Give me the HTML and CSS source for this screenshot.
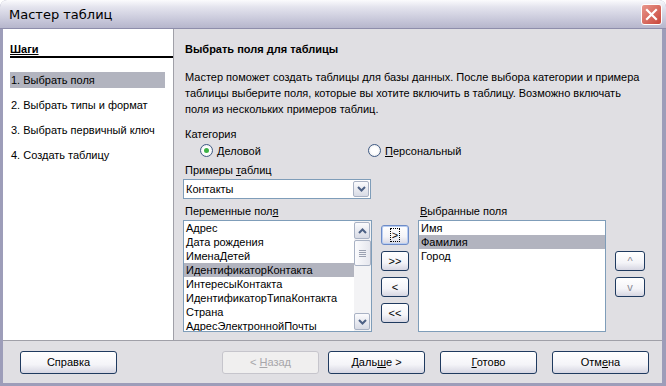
FILE: index.html
```html
<!DOCTYPE html>
<html lang="ru">
<head>
  <meta charset="UTF-8">
  <title>Мастер таблиц</title>
  <link rel="stylesheet" href="styles.css">
</head>
<body>

  <div class="window">
    <div class="titlebar">
      <span class="title">Мастер таблиц</span>
      <span class="close">
        <svg width="13" height="13" viewBox="0 0 13 13"><path d="M2 2 L11 11 M11 2 L2 11" stroke="#fff" stroke-width="2.2" stroke-linecap="square"/></svg>
      </span>
    </div>

    <div class="main">
      <div class="steps">
        <div class="steps-head">Шаги</div>
        <div class="step active">1. Выбрать поля</div>
        <div class="step">2. Выбрать типы и формат</div>
        <div class="step">3. Выбрать первичный ключ</div>
        <div class="step">4. Создать таблицу</div>
      </div>

      <div class="page">
        <div class="page-head">Выбрать поля для таблицы</div>
        <p class="desc">Мастер поможет создать таблицы для базы данных. После выбора категории и примера<br>таблицы выберите поля, которые вы хотите включить в таблицу. Возможно включать<br>поля из нескольких примеров таблиц.</p>

        <div class="label">Категория</div>
        <div class="radios">
          <label class="radio"><span class="dot on"></span><span><u>Д</u>еловой</span></label>
          <label class="radio"><span class="dot"></span><span><u>П</u>ерсональный</span></label>
        </div>

        <div class="label">Примеры <u>т</u>аблиц</div>
        <div class="combo">
          <span>Контакты</span>
          <span class="combo-btn">
            <svg width="9" height="6" viewBox="0 0 9 6"><path d="M1 1 L4.5 4.5 L8 1" stroke="#4d6185" stroke-width="2" fill="none"/></svg>
          </span>
        </div>

        <div class="fields">
          <div class="col">
            <div class="label">Переменные пол<u>я</u></div>
            <div class="list">
              <div class="items">
                <div>Адрес</div>
                <div>Дата рождения</div>
                <div>ИменаДетей</div>
                <div class="sel">ИдентификаторКонтакта</div>
                <div>ИнтересыКонтакта</div>
                <div>ИдентификаторТипаКонтакта</div>
                <div>Страна</div>
                <div>АдресЭлектроннойПочты</div>
              </div>
              <div class="scroll">
                <span class="sb-btn">
                  <svg width="9" height="6" viewBox="0 0 9 6"><path d="M1 5 L4.5 1.5 L8 5" stroke="#4d6185" stroke-width="2" fill="none"/></svg>
                </span>
                <span class="thumb"><i></i><i></i><i></i><i></i></span>
                <span class="track"></span>
                <span class="sb-btn">
                  <svg width="9" height="6" viewBox="0 0 9 6"><path d="M1 1 L4.5 4.5 L8 1" stroke="#4d6185" stroke-width="2" fill="none"/></svg>
                </span>
              </div>
            </div>
          </div>

          <div class="movers">
            <button class="btn small focus"><span class="dotted">&gt;</span></button>
            <button class="btn small">&gt;&gt;</button>
            <button class="btn small">&lt;</button>
            <button class="btn small">&lt;&lt;</button>
          </div>

          <div class="col">
            <div class="label"><u>В</u>ыбранные поля</div>
            <div class="list right">
              <div class="items">
                <div>Имя</div>
                <div class="sel">Фамилия</div>
                <div>Город</div>
              </div>
            </div>
          </div>

          <div class="order">
            <button class="btn small grey">^</button>
            <button class="btn small grey">v</button>
          </div>
        </div>
      </div>
    </div>

    <div class="bottom">
      <button class="btn">Справка</button>
      <span class="spacer"></span>
      <button class="btn disabled">&lt; <u>Н</u>азад</button>
      <button class="btn next">Даль<u>ш</u>е &gt;</button>
      <button class="btn"><u>Г</u>отово</button>
      <button class="btn">Отм<u>е</u>на</button>
    </div>
  </div>

</body>
</html>
```

FILE: styles.css
```css
* {
  box-sizing: border-box;
}

body {
  margin: 0;
  font-family: 'Liberation Sans', Arial, sans-serif;
  font-size: 11px;
  color: #000;
}

.window {
  width: 666px;
  height: 386px;
  background: #9d9db9;
  border-radius: 7px 7px 0 0;
  padding: 0 4px 3px 3px;
  display: flex;
  flex-direction: column;
}

.titlebar {
  height: 29px;
  background: linear-gradient(#fbfbfd 0%, #e4e4ee 25%, #c8c8da 70%, #b6b6cc 100%);
  border-radius: 7px 7px 0 0;
  margin: 0 -4px 0 -3px;
  padding: 0 4px 0 9px;
  display: flex;
  align-items: center;
  justify-content: space-between;
  border-bottom: 1px solid #8e8eab;
}

.title {
  font-family: 'DejaVu Sans', sans-serif;
  font-size: 13px;
  color: #000;
}

.close {
  width: 21px;
  height: 21px;
  border: 1px solid #fff;
  border-radius: 3px;
  background: linear-gradient(135deg, #e8968c, #c9463a);
  display: flex;
  align-items: center;
  justify-content: center;
}

.main {
  flex: 1;
  display: flex;
  background: #e0dfe3;
  border-bottom: 1px solid #a0a0a8;
}

.steps {
  width: 171px;
  background: #fff;
  border-right: 1px solid #a0a0a8;
  padding: 13px 0 0 7px;
}

.steps-head {
  font-weight: bold;
  text-decoration: underline;
  border-bottom: 2px solid #000;
  line-height: 14px;
  margin-bottom: 14px;
}

.step {
  height: 16px;
  line-height: 16px;
  margin-bottom: 9px;
  width: 155px;
  padding-left: 1px;
  white-space: nowrap;
}

.step.active {
  background: #b2b4bf;
}

.page {
  flex: 1;
  padding: 12px 0 0 11px;
}

.page-head {
  font-weight: bold;
  line-height: 16px;
  margin-bottom: 12px;
}

.desc {
  margin: 0 0 9px;
  line-height: 16px;
  white-space: nowrap;
}

.label {
  line-height: 16px;
}

.radios {
  display: flex;
  height: 17px;
  align-items: center;
  padding-left: 15px;
  margin-bottom: 3px;
}

.radio {
  display: flex;
  align-items: center;
  gap: 4px;
  width: 168px;
}

.dot {
  width: 13px;
  height: 13px;
  border-radius: 50%;
  border: 1px solid #3f5a83;
  background: radial-gradient(#fff 40%, #e3e3e6);
  display: flex;
  align-items: center;
  justify-content: center;
}

.dot.on::after {
  content: "";
  width: 5px;
  height: 5px;
  border-radius: 50%;
  background: #3db246;
}

.combo {
  width: 188px;
  height: 20px;
  margin: 1px 0 0 -2px;
  background: #fff;
  border: 1px solid #7f9db9;
  display: flex;
  align-items: center;
  justify-content: space-between;
  padding: 0 1px 0 2px;
}

.combo-btn, .sb-btn {
  width: 16px;
  height: 16px;
  border: 1px solid #a9b2c4;
  border-radius: 2px;
  background: linear-gradient(#fbfbfd, #d8dbe5);
  display: flex;
  align-items: center;
  justify-content: center;
}

.fields {
  display: flex;
  margin: 4px 0 0 -2px;
}

.col .label {
  padding-left: 2px;
  margin-bottom: 1px;
}

.list {
  width: 189px;
  height: 112px;
  background: #fff;
  border: 1px solid #7f9db9;
  display: flex;
  overflow: hidden;
}

.list.right {
  width: 188px;
}

.items {
  flex: 1;
}

.items div {
  height: 14px;
  line-height: 14px;
  padding-left: 2px;
  white-space: nowrap;
}

.items .sel {
  background: #b2b4bf;
}

.scroll {
  width: 17px;
  display: flex;
  flex-direction: column;
  background: #f3f3f5;
  padding: 1px 0;
}

.scroll .sb-btn {
  height: 17px;
}

.thumb {
  height: 26px;
  margin-top: 1px;
  border: 1px solid #a9b2c4;
  border-radius: 2px;
  background: linear-gradient(90deg, #fbfbfd, #e6e7ee);
  display: flex;
  flex-direction: column;
  align-items: center;
  justify-content: center;
  gap: 1px;
}

.thumb i {
  width: 7px;
  height: 1px;
  background: #9aa0b0;
}

.track {
  flex: 1;
}

.movers {
  display: flex;
  flex-direction: column;
  padding: 22px 0 0 9px;
  width: 46px;
  gap: 6px;
}

.order {
  display: flex;
  flex-direction: column;
  padding: 48px 0 0 9px;
  gap: 6px;
}

.btn {
  font-family: 'Liberation Sans', Arial, sans-serif;
  font-size: 11px;
  color: #000;
  width: 97px;
  height: 23px;
  border: 1px solid #1f3a5f;
  border-radius: 3px;
  background: linear-gradient(#ffffff 0%, #f4f4f8 60%, #d6d6e2 100%);
  padding: 0;
}

.btn.small {
  width: 28px;
  height: 20px;
}

.order .btn.small {
  width: 30px;
}

.btn.grey {
  color: #8a8a94;
}

.btn.focus {
  border-color: #6d8bc7;
  box-shadow: inset 0 0 0 1px #b8cdf2;
}

.dotted {
  border: 1px dotted #000;
  padding: 0 1px;
}

.btn.disabled {
  color: #a7a6aa;
  border-color: #c6c5cc;
  background: #f0efef;
}

.bottom {
  height: 42px;
  background: #e0dfe3;
  display: flex;
  align-items: center;
  padding: 0 13px 0 17px;
  gap: 15px;
}

.spacer {
  flex: 1;
}

.bottom .btn.next {
  margin-left: -6px;
}
```
